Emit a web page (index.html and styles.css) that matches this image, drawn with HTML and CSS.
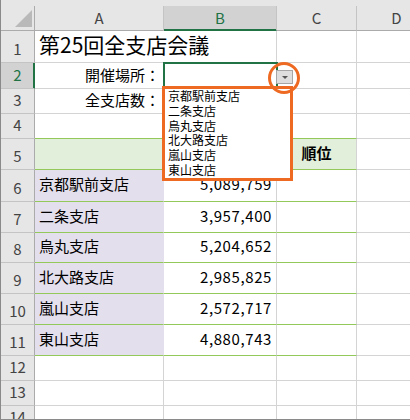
FILE: index.html
```html
<!DOCTYPE html>
<html lang="ja">
<head>
<meta charset="utf-8">
<title>第25回全支店会議</title>
<link rel="stylesheet" href="styles.css">
</head>
<body>
<div class="sheet">
  <div class="grid">
    <div class="corner"><svg class="corner-tri" width="33" height="24" viewBox="0 0 33 24"><polygon points="31,4 31,21 14,21" fill="#b9b9b9"/></svg></div>
    <div class="ch">A</div>
    <div class="ch ch-sel">B</div>
    <div class="ch">C</div>
    <div class="ch">D</div>

    <div class="rh">1</div>
    <div class="c c-a1"><span class="title">第25回全支店会議</span></div>
    <div class="c"></div>
    <div class="c"></div>
    <div class="c"></div>

    <div class="rh rh-sel">2</div>
    <div class="c c-label">開催場所：</div>
    <div class="c c-active">
      <div class="dd-btn"><span class="dd-tri"></span></div>
      <div class="dd-ring"></div>
      <ul class="dd-list">
        <li>京都駅前支店</li>
        <li>二条支店</li>
        <li>烏丸支店</li>
        <li>北大路支店</li>
        <li>嵐山支店</li>
        <li>東山支店</li>
      </ul>
    </div>
    <div class="c"></div>
    <div class="c"></div>

    <div class="rh">3</div>
    <div class="c c-label">全支店数：</div>
    <div class="c"></div>
    <div class="c"></div>
    <div class="c"></div>

    <div class="rh">4</div>
    <div class="c g-bottom"></div>
    <div class="c g-bottom"></div>
    <div class="c g-bottom"></div>
    <div class="c"></div>

    <div class="rh">5</div>
    <div class="c hd hd-mid"></div>
    <div class="c hd hd-mid"></div>
    <div class="c hd hd-text">順位</div>
    <div class="c"></div>

    <div class="rh">6</div>
    <div class="c name">京都駅前支店</div>
    <div class="c num">5,089,759</div>
    <div class="c g-bottom"></div>
    <div class="c"></div>

    <div class="rh">7</div>
    <div class="c name">二条支店</div>
    <div class="c num">3,957,400</div>
    <div class="c g-bottom"></div>
    <div class="c"></div>

    <div class="rh">8</div>
    <div class="c name">烏丸支店</div>
    <div class="c num">5,204,652</div>
    <div class="c g-bottom"></div>
    <div class="c"></div>

    <div class="rh">9</div>
    <div class="c name">北大路支店</div>
    <div class="c num">2,985,825</div>
    <div class="c g-bottom"></div>
    <div class="c"></div>

    <div class="rh">10</div>
    <div class="c name">嵐山支店</div>
    <div class="c num">2,572,717</div>
    <div class="c g-bottom"></div>
    <div class="c"></div>

    <div class="rh">11</div>
    <div class="c name">東山支店</div>
    <div class="c num">4,880,743</div>
    <div class="c g-bottom"></div>
    <div class="c"></div>

    <div class="rh">12</div>
    <div class="c"></div>
    <div class="c"></div>
    <div class="c"></div>
    <div class="c"></div>

    <div class="rh">13</div>
    <div class="c"></div>
    <div class="c"></div>
    <div class="c"></div>
    <div class="c"></div>

    <div class="rh">14</div>
    <div class="c"></div>
    <div class="c"></div>
    <div class="c"></div>
    <div class="c"></div>
  </div>
</div>
</body>
</html>
```

FILE: styles.css
```css
html, body {
  margin: 0;
  padding: 0;
  background: #ffffff;
}

.sheet {
  width: 410px;
  height: 420px;
  box-sizing: border-box;
  border-left: 1px solid #8a8a8a;
  border-bottom: 1px solid #8a8a8a;
  padding-top: 6px;
  background: #e6e6e6;
  overflow: hidden;
  font-family: "Noto Sans CJK JP", "Noto Sans", sans-serif;
  color: #000;
}

.grid {
  display: grid;
  grid-template-columns: 34px 129px 113px 80px 80px;
  grid-template-rows: 25px 32px 26px 25px 25px 31px 32px 31px 30px 31px 31px 31px 25px 25px 25px;
  background: #ffffff;
}

.grid > div {
  box-sizing: border-box;
  border-right: 1px solid #d4d4d4;
  border-bottom: 1px solid #d4d4d4;
  min-width: 0;
}

/* headers */
.corner {
  background: #e6e6e6;
  border-right-color: #ababab !important;
  border-bottom-color: #ababab !important;
  position: relative;
}
.corner-tri {
  display: block;
}

.ch {
  background: #e6e6e6;
  border-right-color: #c4c4c4 !important;
  border-bottom-color: #ababab !important;
  display: flex;
  align-items: center;
  justify-content: center;
  font-size: 15px;
  line-height: 20px;
  color: #444;
}
.ch-sel {
  background: #d2d2d2;
  color: #217346;
  border-bottom-color: #217346 !important;
  box-shadow: inset 0 -1px 0 #217346;
}

.rh {
  background: #e6e6e6;
  border-right-color: #ababab !important;
  border-bottom-color: #c4c4c4 !important;
  display: flex;
  align-items: flex-end;
  justify-content: center;
  font-size: 15px;
  line-height: 22px;
  padding-bottom: 2px;
  color: #444;
}
.rh-sel {
  background: #d2d2d2;
  color: #217346;
  border-right-color: #217346 !important;
  box-shadow: inset -1px 0 0 #217346;
}

/* cells */
.c {
  display: flex;
  align-items: center;
  font-size: 15px;
  line-height: 20px;
  padding-bottom: 3px;
  white-space: nowrap;
}

.c-a1 {
  border-right-color: transparent !important;
  overflow: visible;
  padding-left: 4px;
  padding-bottom: 6px;
}
.title {
  font-size: 21px;
  line-height: 24px;
}

.c-label {
  justify-content: flex-end;
  padding-right: 3px;
  padding-bottom: 2px;
}

.c-active {
  position: relative;
  outline: 2px solid #217346;
  outline-offset: -1px;
  z-index: 2;
}

.g-bottom {
  border-bottom-color: #92c95a !important;
}

.hd {
  background: #e2efda;
  border-bottom-color: #92c95a !important;
  padding-bottom: 2px;
}
.hd-mid {
  border-right-color: #e2efda !important;
}
.hd-text {
  justify-content: center;
  font-weight: 700;
}

.name {
  background: #e4dfec;
  border-right-color: #e4dfec !important;
  border-bottom-color: #92c95a !important;
  padding-left: 4px;
}

.num {
  justify-content: flex-end;
  padding-right: 4px;
  border-bottom-color: #92c95a !important;
  letter-spacing: 0.6px;
}

/* dropdown overlay */
.dd-btn {
  position: absolute;
  left: 112px;
  top: 7px;
  width: 17px;
  height: 14px;
  box-sizing: border-box;
  background: #dedede;
  border: 1px solid #a6a6a6;
  display: flex;
  align-items: center;
  justify-content: center;
  z-index: 4;
}
.dd-tri {
  width: 0;
  height: 0;
  border-top: 3px solid #555;
  border-left: 3px solid transparent;
  border-right: 3px solid transparent;
}

.dd-ring {
  position: absolute;
  left: 104px;
  top: -1px;
  width: 32px;
  height: 32px;
  box-sizing: border-box;
  border: 3px solid #ee6a22;
  border-radius: 50%;
  z-index: 6;
}

.dd-list {
  position: absolute;
  left: -2px;
  top: 23px;
  width: 131px;
  height: 95px;
  box-sizing: border-box;
  margin: 0;
  padding: 0 0 0 3px;
  list-style: none;
  background: #ffffff;
  border: 3px solid #ee6a22;
  z-index: 5;
}
.dd-list li {
  font-size: 12px;
  line-height: 14.8px;
  color: #000;
  white-space: nowrap;
}
```
